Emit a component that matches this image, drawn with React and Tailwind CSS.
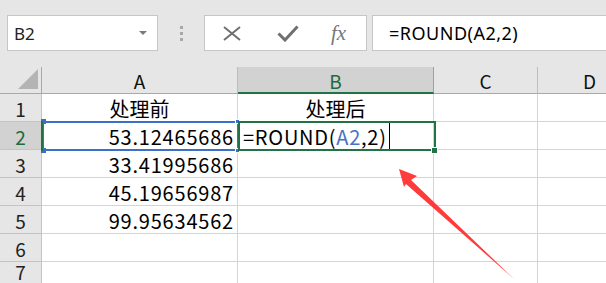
import React from "react";

const cellFont = { fontFamily: '"Noto Sans CJK SC", "Noto Sans", sans-serif' };

function Cell({ children, className = "" }) {
  return (
    <div className={`border-r border-b border-[#d4d4d4] bg-white flex items-end overflow-visible whitespace-nowrap text-[20px] leading-none text-black pb-[2px] ${className}`}>
      {children}
    </div>
  );
}

function RowHead({ n, sel }) {
  return (
    <div className={`border-b border-r border-[#c4c4c4] flex items-end justify-center text-[19px] leading-none pb-[3px] ${sel ? "bg-[#d2d2d2] text-[#1e6b41]" : "bg-[#e6e6e6] text-[#222]"}`}>
      {n}
    </div>
  );
}

export default function App() {
  const nums = ["53.12465686", "33.41995686", "45.19656987", "99.95634562"];
  return (
    <div className="relative w-[606px] h-[283px] overflow-hidden bg-[#e6e6e6]" style={cellFont}>
      {/* toolbar */}
      <div className="h-[67px] flex items-start pt-[15px] pl-[7px]">
        <div className="w-[151px] h-[36px] bg-white border border-[#c6c6c6] flex items-center pl-[6px] pr-[10px]">
          <span className="text-[17px] leading-none text-[#222]" style={{ fontFamily: '"Noto Sans", sans-serif' }}>B2</span>
          <div className="ml-auto w-0 h-0 border-l-[4px] border-r-[4px] border-t-[4px] border-l-transparent border-r-transparent border-t-[#7a7a7a]" />
        </div>
        <div className="w-[46px] h-[36px] flex flex-col items-center justify-center gap-[3px]">
          <div className="w-[3px] h-[3px] bg-[#a8a8a8]" />
          <div className="w-[3px] h-[3px] bg-[#a8a8a8]" />
          <div className="w-[3px] h-[3px] bg-[#a8a8a8]" />
        </div>
        <div className="w-[163px] h-[36px] bg-white border border-[#c6c6c6] flex items-center pl-[18px]">
          <svg width="18" height="15" viewBox="0 0 18 15" className="shrink-0">
            <path d="M1 1 L17 14 M17 1 L1 14" stroke="#707070" strokeWidth="2" fill="none" />
          </svg>
          <svg width="22" height="17" viewBox="0 0 22 17" className="ml-[36px] shrink-0">
            <path d="M1.5 8.5 L8 15 L20.5 1.5" stroke="#707070" strokeWidth="3" fill="none" />
          </svg>
          <span className="ml-[32px] text-[21px] leading-none italic text-[#777]" style={{ fontFamily: '"Liberation Serif", serif' }}>fx</span>
        </div>
        <div className="ml-[5px] flex-1 h-[36px] bg-white border-y border-l border-[#c6c6c6] flex items-center pl-[16px]">
          <span className="text-[18px] leading-none text-black tracking-[0.5px]" style={{ fontFamily: '"Noto Sans", sans-serif' }}>=ROUND(A2,2)</span>
        </div>
      </div>

      {/* sheet */}
      <div className="grid grid-cols-[42px_196px_196px_104px_104px] grid-rows-[27px_28px_28px_28px_28px_28px_28px]">
        {/* header row */}
        <div className="bg-[#e6e6e6] border-r border-b border-[#a9a9a9] flex items-end justify-end pr-[3px] pb-[4px]">
          <div className="w-0 h-0 border-l-[20px] border-b-[20px] border-l-transparent border-b-[#b4b4b4]" />
        </div>
        <div className="bg-[#e6e6e6] border-r border-b border-r-[#bdbdbd] border-b-[#a9a9a9] flex items-end justify-center pb-[3px] text-[19px] leading-none text-[#111]">A</div>
        <div className="bg-[#d2d2d2] border-r border-r-[#a0a0a0] border-b-2 border-b-[#217346] flex items-end justify-center pb-[2px] text-[19px] leading-none text-[#1e6b41]">B</div>
        <div className="bg-[#e6e6e6] border-r border-b border-r-[#bdbdbd] border-b-[#a9a9a9] flex items-end justify-center pb-[3px] text-[19px] leading-none text-[#111]">C</div>
        <div className="bg-[#e6e6e6] border-r border-b border-r-[#bdbdbd] border-b-[#a9a9a9] flex items-end justify-center pb-[3px] text-[19px] leading-none text-[#111]">D</div>

        {/* row 1 */}
        <RowHead n="1" />
        <Cell className="justify-center">处理前</Cell>
        <Cell className="justify-center">处理后</Cell>
        <Cell />
        <Cell />

        {/* row 2 */}
        <RowHead n="2" sel />
        <Cell className="justify-end pr-[3px] bg-[#e8eef9] tracking-[0.8px]">{nums[0]}</Cell>
        <Cell className="pl-[5px] tracking-[0.75px]">
          <span>=ROUND(</span>
          <span className="text-[#4472c4]">A2</span>
          <span>,2)</span>
        </Cell>
        <Cell />
        <Cell />

        {[3, 4, 5].map((r, i) => (
          <React.Fragment key={r}>
            <RowHead n={String(r)} />
            <Cell className="justify-end pr-[3px] tracking-[0.8px]">{nums[i + 1]}</Cell>
            <Cell />
            <Cell />
            <Cell />
          </React.Fragment>
        ))}
        {[6, 7].map((r) => (
          <React.Fragment key={r}>
            <RowHead n={String(r)} />
            <Cell />
            <Cell />
            <Cell />
            <Cell />
          </React.Fragment>
        ))}
      </div>

      {/* A2 reference highlight */}
      <div className="absolute left-[42px] top-[121px] w-[197px] h-[30px] border-2 border-[#3a70c9] pointer-events-none" />
      <div className="absolute left-[41px] top-[119px] w-[5px] h-[5px] bg-[#3a70c9]" />
      <div className="absolute left-[235px] top-[119px] w-[5px] h-[5px] bg-[#3a70c9] border border-white" />
      <div className="absolute left-[41px] top-[148px] w-[5px] h-[5px] bg-[#3a70c9]" />
      <div className="absolute left-[235px] top-[148px] w-[5px] h-[5px] bg-[#3a70c9] border border-white" />
      {/* row header selection edge */}
      <div className="absolute left-[41px] top-[121px] w-[2px] h-[30px] bg-[#217346]" />

      {/* B2 active cell */}
      <div className="absolute left-[238px] top-[121px] w-[198px] h-[30px] border-2 border-[#217346] pointer-events-none" />
      <div className="absolute left-[431px] top-[147px] w-[7px] h-[7px] bg-[#217346] border border-white" />
      {/* caret */}
      <div className="absolute left-[389px] top-[123px] w-[1px] h-[26px] bg-black" />

      {/* arrow */}
      <svg className="absolute left-0 top-0 pointer-events-none" width="606" height="283" viewBox="0 0 606 283">
        <polygon points="399,169 417,176 411,180 514,279 406,184 404,187" fill="#ff3b3b" />
      </svg>
    </div>
  );
}
